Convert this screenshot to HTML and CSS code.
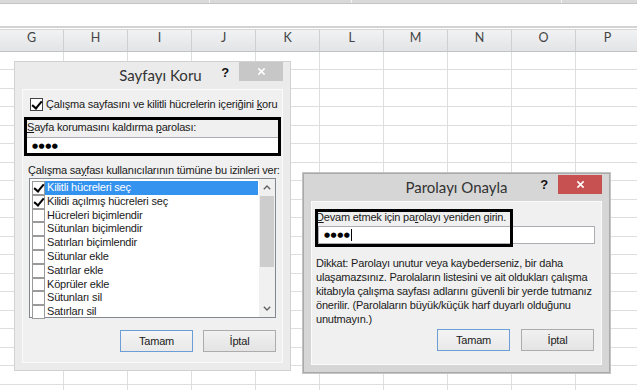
FILE: index.html
```html
<!DOCTYPE html>
<html>
<head>
<meta charset="UTF-8">
<title>Sayfayı Koru</title>
<link rel="stylesheet" href="styles.css">
</head>
<body>

<div class="ribbon"><span class="r1"></span><span class="r2"></span><span class="r3"></span></div>
<div class="formula"></div>
<div class="colheads">
<div>G</div><div>H</div><div>I</div><div>J</div><div>K</div>
<div>L</div><div>M</div><div>N</div><div>O</div><div>P</div>
</div>
<div class="cells"></div>

<div class="dialog protect">
<div class="titlebar">
<span></span>
<span class="title">Sayfayı Koru</span>
<span class="controls"><span class="help">?</span><span class="close"><svg viewBox="0 0 10 10"><path d="M1.5 1.5L8.5 8.5M8.5 1.5L1.5 8.5"/></svg></span></span>
</div>
<div class="panel">
<div class="check-row"><span class="box checked"></span><span>Çalışma sayfasını ve kilitli hücrelerin içeriğini <u>k</u>oru</span></div>

<div class="field first">
<div class="label"><u>S</u>ayfa korumasını kaldırma <u>p</u>arolası:</div>
<div class="input"><span class="dots">●●●●</span></div>
<div class="mark"></div>
</div>

<div class="perm-label">Çalışma sa<u>y</u>fası kullanıcılarının tümüne bu izinleri ver:</div>
<div class="listbox">
<div class="items">
<div class="item sel"><span class="box checked"></span><span class="text">Kilitli hücreleri seç</span></div>
<div class="item"><span class="box checked"></span><span class="text">Kilidi açılmış hücreleri seç</span></div>
<div class="item"><span class="box"></span><span class="text">Hücreleri biçimlendir</span></div>
<div class="item"><span class="box"></span><span class="text">Sütunları biçimlendir</span></div>
<div class="item"><span class="box"></span><span class="text">Satırları biçimlendir</span></div>
<div class="item"><span class="box"></span><span class="text">Sütunlar ekle</span></div>
<div class="item"><span class="box"></span><span class="text">Satırlar ekle</span></div>
<div class="item"><span class="box"></span><span class="text">Köprüler ekle</span></div>
<div class="item"><span class="box"></span><span class="text">Sütunları sil</span></div>
<div class="item"><span class="box"></span><span class="text">Satırları sil</span></div>
</div>
<div class="scrollbar">
<span class="arrow"><svg viewBox="0 0 8 5"><path d="M0.8 4.2L4 1L7.2 4.2"/></svg></span>
<span class="thumb"></span>
<span class="track"></span>
<span class="arrow"><svg viewBox="0 0 8 5"><path d="M0.8 0.8L4 4L7.2 0.8"/></svg></span>
</div>
</div>

<div class="buttons">
<div class="btn default">Tamam</div>
<div class="btn">İptal</div>
</div>
</div>
</div>

<div class="dialog confirm">
<div class="titlebar">
<span></span>
<span class="title">Parolayı Onayla</span>
<span class="controls"><span class="help">?</span><span class="close red"><svg viewBox="0 0 10 10"><path d="M1.5 1.5L8.5 8.5M8.5 1.5L1.5 8.5"/></svg></span></span>
</div>
<div class="panel">
<div class="field second">
<div class="label"><u>D</u>evam etmek için pa<u>r</u>olayı yeniden girin.</div>
<div class="input"><span class="dots">●●●●</span><span class="caret"></span></div>
<div class="mark"></div>
</div>

<p class="note">Dikkat: Parolayı unutur veya kaybederseniz, bir daha<br>
ulaşamazsınız. Parolaların listesini ve ait oldukları çalışma<br>
kitabıyla çalışma sayfası adlarını güvenli bir yerde tutmanız<br>
önerilir. (Parolaların büyük/küçük harf duyarlı olduğunu<br>
unutmayın.)</p>

<div class="buttons">
<div class="btn default">Tamam</div>
<div class="btn">İptal</div>
</div>
</div>
</div>

</body>
</html>
```

FILE: styles.css
```css
*{
box-sizing: border-box;
margin:0; padding:0;
}

body{
width: 637px; height: 390px;
overflow: hidden;
position: relative;
background: #fff;
font: 11px "Liberation Sans", Arial, sans-serif;
letter-spacing: -0.2px;
color: #1a1a1a;
}

u{ text-decoration: underline; text-underline-offset: 1px; }

/*--- sheet behind ---*/
.ribbon{
display: flex;
height: 4px;
background: #d9d9d9;
border-bottom: 1px solid #c4c4c4;
}
.ribbon span{ border-right: 1px solid #f5f5f5; }
.r1{ width: 210px; }
.r2{ width: 142px; }
.r3{ width: 210px; }

.formula{
height: 24px;
border-bottom: 2px solid #d3d3d3;
}

.colheads{
display: flex;
height: 23px;
margin-top: 1px;
background: linear-gradient(#f1f2f3, #e3e4e6);
border-top: 1px solid #d6d6d6;
border-bottom: 1px solid #c2c2c2;
}
.colheads div{
flex: none;
width: 64px;
text-align: center;
line-height: 21px;
color: #444;
font: 12.5px Lato, sans-serif;
border-right: 1px solid #cfd0d2;
}

.cells{
height: 340px;
background:
repeating-linear-gradient(to right, transparent 0 63px, #dddede 63px 64px),
repeating-linear-gradient(to bottom, transparent 0 17.5px, #dddede 17.5px 18.5px);
}

/*--- dialogs ---*/
.dialog{
position: absolute;
display: flex;
flex-direction: column;
padding: 0 7px 7px;
}
.protect{
left: 14px; top: 61px;
width: 277px; height: 310px;
background: #ebebeb;
border: 1px solid #d2d2d2;
}
.confirm{
left: 303px; top: 173px;
width: 307px; height: 200px;
background: #d6d6d6;
border: 1px solid #a9a9a9;
box-shadow: 0 0 0 1px #c4c4c4;
}

.titlebar{
height: 27px;
display: grid;
grid-template-columns: 1fr auto 1fr;
align-items: start;
}
.title{
font: 15px Lato, sans-serif;
letter-spacing: 0;
color: #333;
padding-top: 4px;
}
.protect .title{ padding-left: 16px; }
.controls{
display: flex;
justify-content: flex-end;
align-items: flex-start;
}
.help{
font: bold 13px "Liberation Sans", sans-serif;
color: #111;
margin: 3px 10px 0 0;
}
.close{
width: 44px; height: 19px;
background: #c7c7c7;
display: flex;
align-items: center;
justify-content: center;
}
.close.red{ background: #c75050; margin-top: 1px; }
.close svg{
width: 9px; height: 9px;
stroke: #fff; stroke-width: 1.7; fill: none;
}

.panel{
flex: 1;
background: #f0f0f0;
border: 1px solid #fbfbfb;
display: flex;
flex-direction: column;
}

/*--- checkboxes ---*/
.box{
flex: none;
width: 13px; height: 13px;
background: #fff;
border: 1px solid #8a8a8a;
position: relative;
}
.box.checked::after{
content: "";
position: absolute;
left: 3px; top: 0px;
width: 4px; height: 8px;
border: solid #000;
border-width: 0 2px 2px 0;
transform: rotate(40deg);
}

.check-row{
display: flex;
align-items: center;
gap: 3px;
margin: 7px 0 0 7px;
height: 14px;
white-space: nowrap;
}
.check-row .box{ border-color: #444; }

/*--- password fields ---*/
.field{ position: relative; }
.label{ line-height: 14px; white-space: nowrap; }
.input{
background: #fff;
border: 1px solid #abadb3;
display: flex;
align-items: center;
padding-left: 5px;
}
.dots{
font: 7px "DejaVu Sans", sans-serif;
letter-spacing: 0.5px;
color: #000;
}
.caret{
width: 1px; height: 12px;
background: #000;
margin-left: 1px;
}
.mark{
position: absolute;
border: 3px solid #000;
pointer-events: none;
}

.field.first{
margin: 6px 1px 0 1px;
padding: 3px 2px 2px;
}
.field.first .label{ padding-left: 1px; }
.field.first .input{ height: 17px; margin-top: 3px; }
.field.first .mark{ inset: 0; }

.field.second{
margin: 8px 6px 0 4px;
}
.field.second .input{ height: 18px; margin: 2px 0 0 2px; }
.field.second .mark{
left: -1px; top: -1px;
width: 198px; height: 38px;
}

/*--- permission list ---*/
.perm-label{
margin: 7px 0 0 5px;
line-height: 14px;
white-space: nowrap;
}
.listbox{
margin: 1px 0 0 6px;
width: 247px; height: 140px;
border: 1px solid #828790;
background: #fff;
display: flex;
}
.items{
flex: 1;
padding: 2px 1px 0 2px;
}
.item{
display: flex;
height: 13.8px;
}
.item .box{ height: 13.8px; border-color: #9a9a9a; }
.item .text{
flex: 1;
padding-left: 2px;
line-height: 13.8px;
white-space: nowrap;
}
.item.sel .text{
background: #3593f0;
color: #fff;
}
.scrollbar{
width: 16px;
background: #f0f0f0;
display: flex;
flex-direction: column;
}
.arrow{
height: 17px;
display: flex;
align-items: center;
justify-content: center;
}
.arrow svg{
width: 8px; height: 5px;
fill: none; stroke: #606060; stroke-width: 1.3;
}
.thumb{
height: 71px;
margin: 0 1px;
background: #cdcdcd;
}
.track{ flex: 1; }

/*--- note text ---*/
.note{
margin: 12px 0 0 4px;
line-height: 14px;
white-space: nowrap;
}

/*--- buttons ---*/
.buttons{
display: flex;
justify-content: flex-end;
gap: 10px;
margin: 12px 6px 0 0;
}
.confirm .buttons{
gap: 11px;
margin: 3px 7px 0 0;
}
.btn{
width: 73px; height: 22px;
border: 1px solid #acacac;
background: linear-gradient(#f1f1f1, #e4e4e4);
display: flex;
align-items: center;
justify-content: center;
}
.btn.default{
border-color: #6b9ed6;
background: linear-gradient(#f4f4f4, #e9e9e9);
}
```
